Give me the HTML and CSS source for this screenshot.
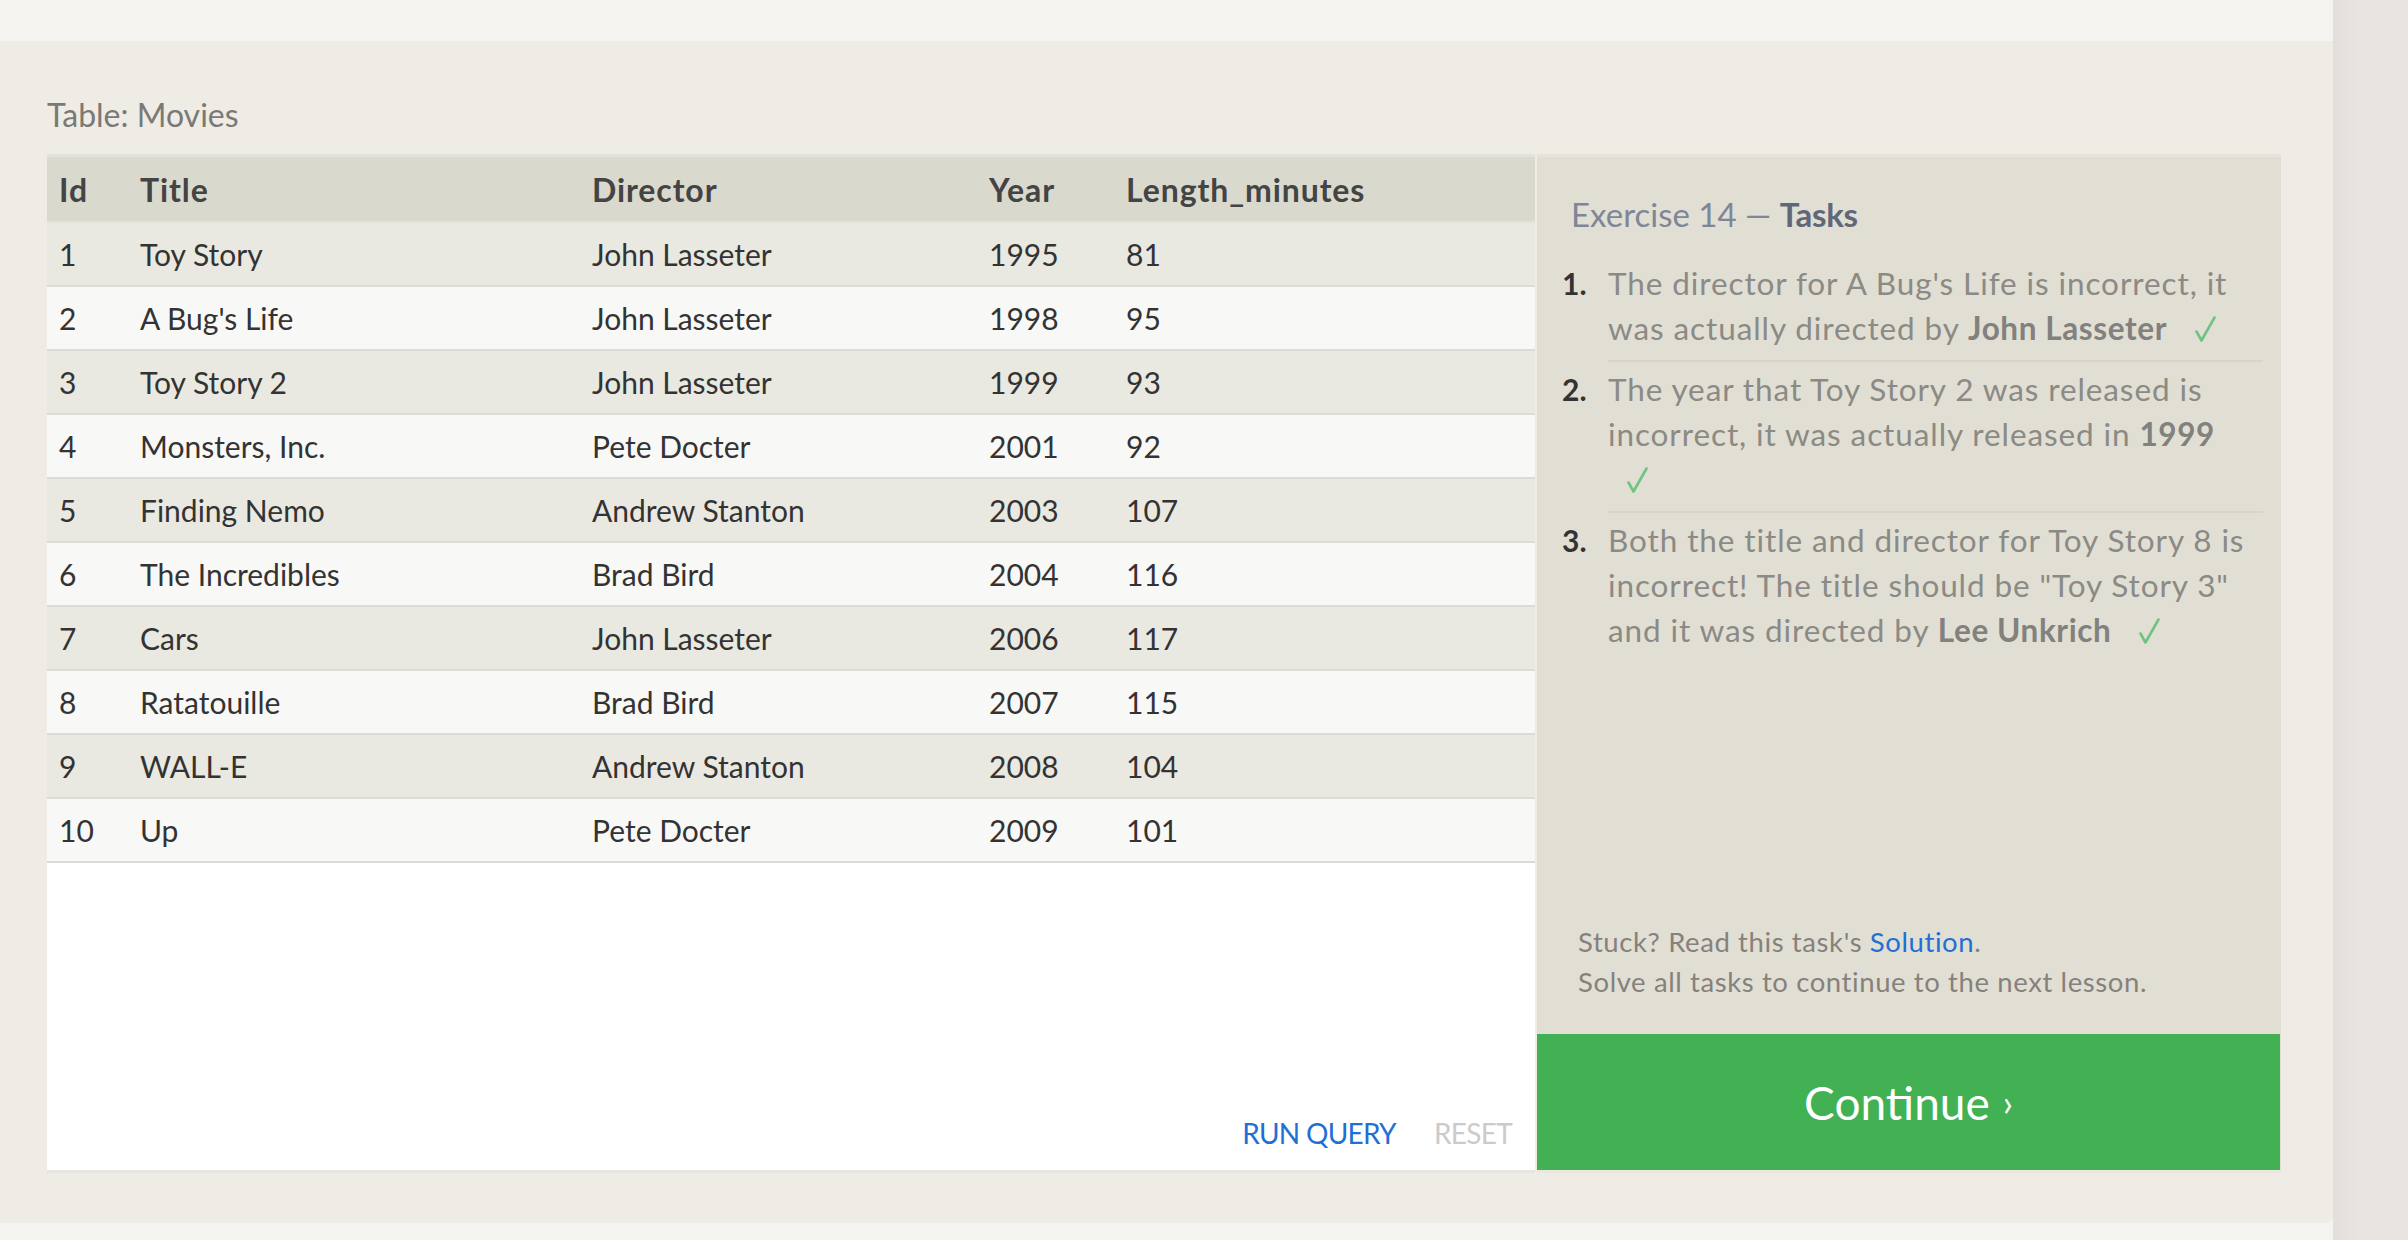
FILE: index.html
```html
<!DOCTYPE html>
<html lang="en">
<head>
<meta charset="utf-8">
<title>SQL Lesson – Exercise 14</title>
<link rel="stylesheet" href="styles.css">
</head>
<body>
<div class="page">
  <div class="main">
    <div class="topband"></div>
    <div class="lesson">
      <div class="caption">Table: Movies</div>
      <div class="exercise">
        <div class="left">
          <table class="results">
            <colgroup>
              <col class="c-id"><col class="c-title"><col class="c-dir"><col class="c-year"><col>
            </colgroup>
            <thead>
              <tr><th>Id</th><th>Title</th><th>Director</th><th>Year</th><th>Length_minutes</th></tr>
            </thead>
            <tbody>
              <tr><td>1</td><td>Toy Story</td><td>John Lasseter</td><td>1995</td><td>81</td></tr>
              <tr><td>2</td><td>A Bug's Life</td><td>John Lasseter</td><td>1998</td><td>95</td></tr>
              <tr><td>3</td><td>Toy Story 2</td><td>John Lasseter</td><td>1999</td><td>93</td></tr>
              <tr><td>4</td><td>Monsters, Inc.</td><td>Pete Docter</td><td>2001</td><td>92</td></tr>
              <tr><td>5</td><td>Finding Nemo</td><td>Andrew Stanton</td><td>2003</td><td>107</td></tr>
              <tr><td>6</td><td>The Incredibles</td><td>Brad Bird</td><td>2004</td><td>116</td></tr>
              <tr><td>7</td><td>Cars</td><td>John Lasseter</td><td>2006</td><td>117</td></tr>
              <tr><td>8</td><td>Ratatouille</td><td>Brad Bird</td><td>2007</td><td>115</td></tr>
              <tr><td>9</td><td>WALL-E</td><td>Andrew Stanton</td><td>2008</td><td>104</td></tr>
              <tr><td>10</td><td>Up</td><td>Pete Docter</td><td>2009</td><td>101</td></tr>
            </tbody>
          </table>
          <div class="query">
            <span class="btn run">RUN QUERY</span>
            <span class="btn reset">RESET</span>
          </div>
        </div>
        <div class="right">
          <h2 class="ex-title">Exercise 14 — <span class="tasks">Tasks</span></h2>
          <ol class="task-list">
            <li><span class="num">1.</span><span class="txt">The director for A Bug's Life is incorrect, it was actually directed by <b>John Lasseter</b> <svg class="check" viewBox="0 0 22 26" width="22" height="26"><path d="M2.5 15.5 L7.5 24.5 L20.5 1.5" /></svg></span></li>
            <li><span class="num">2.</span><span class="txt">The year that Toy Story 2 was released is incorrect, it was actually released in <b>1999</b> <svg class="check" viewBox="0 0 22 26" width="22" height="26"><path d="M2.5 15.5 L7.5 24.5 L20.5 1.5" /></svg></span></li>
            <li><span class="num">3.</span><span class="txt">Both the title and director for Toy Story 8 is incorrect! The title should be "Toy Story 3" and it was directed by <b>Lee Unkrich</b> <svg class="check" viewBox="0 0 22 26" width="22" height="26"><path d="M2.5 15.5 L7.5 24.5 L20.5 1.5" /></svg></span></li>
          </ol>
          <div class="help">
            <div>Stuck? Read this task's <a class="link" href="#">Solution</a>.</div>
            <div>Solve all tasks to continue to the next lesson.</div>
          </div>
          <div class="continue">Continue <span class="chev">›</span></div>
        </div>
      </div>
    </div>
    <div class="bottomband"></div>
  </div>
  <div class="strip"></div>
</div>
</body>
</html>
```

FILE: styles.css
```css
* { box-sizing: border-box; }
html, body { margin: 0; padding: 0; }
body {
  width: 2408px;
  height: 1240px;
  overflow: hidden;
  font-family: Lato, "Liberation Sans", sans-serif;
  background: #e8e4e1;
}
.page { display: flex; height: 1240px; }
.main { width: 2333px; display: flex; flex-direction: column; background: #f5f4f0; }
.topband { height: 41px; background: #f5f4f0; }
.lesson {
  height: 1182px;
  background: #efece5;
  border-bottom-right-radius: 7px;
  padding: 54px 52px 0 47px;
}
.bottomband { flex: 1; background: #f5f4f0; }
.strip { flex: 1; background: linear-gradient(to right, #e2dedb, #e8e4e1 24px); }

.caption {
  font-size: 32px;
  line-height: 40px;
  height: 40px;
  color: #7a7976;
  margin-bottom: 19px;
}

.exercise { display: flex; gap: 2px; height: 1019px; }

.left {
  width: 1488px;
  display: flex;
  flex-direction: column;
  background: #fff;
  border-top: 3px solid #e3e2db;
  border-bottom: 3px solid #e7e5dd;
}
.results {
  width: 100%;
  border-collapse: separate;
  border-spacing: 0;
  table-layout: fixed;
  font-size: 30px;
}
.c-id { width: 81px; }
.c-title { width: 452px; }
.c-dir { width: 397px; }
.c-year { width: 137px; }
.results th, .results td {
  text-align: left;
  padding: 0 0 0 12px;
  white-space: nowrap;
  border-bottom: 2px solid #dcdcd6;
}
.results th {
  height: 66px;
  background: #dad9ce;
  color: #444;
  font-size: 32px;
  font-weight: 700;
  letter-spacing: 0.9px;
  border-bottom-color: #e2e1dc;
}
.results td { height: 64px; color: #333; }
.results tbody tr:nth-child(odd) td { background: #e9e8e1; }
.results tbody tr:nth-child(even) td { background: #f8f8f7; }

.query {
  flex: 1;
  display: flex;
  justify-content: flex-end;
  align-items: flex-end;
  gap: 38px;
  padding: 0 23px 19px 0;
  font-size: 28px;
  line-height: 36px;
}
.btn { letter-spacing: -0.7px; }
.run { color: #1f6fd6; }
.reset { color: #cbcbcb; }

.right {
  width: 744px;
  display: flex;
  flex-direction: column;
  background: #e1dfd4;
  border-top: 3px solid #e5e3da;
  border-bottom: 3px solid #e9e7df;
}
.ex-title {
  margin: 37px 0 0 34px;
  font-size: 33px;
  line-height: 40px;
  font-weight: 400;
  color: #7e8698;
}
.tasks { color: #5f6779; font-weight: 700; letter-spacing: -0.3px; }

.task-list {
  list-style: none;
  margin: 22px 18px 0 25px;
  padding: 0;
  font-size: 31.5px;
  line-height: 45px;
}
.task-list li { display: flex; }
.num {
  width: 46px;
  flex: none;
  padding-top: 5px;
  font-size: 30px;
  font-weight: 700;
  color: #333;
}
.txt {
  flex: 1;
  padding: 5px 0 9px;
  border-bottom: 2px solid #d7d5ca;
  color: #8b8a85;
  letter-spacing: 0.9px;
}
.task-list li:last-child .txt { border-bottom: none; }
.txt b { font-weight: 700; color: #82817d; letter-spacing: 0.6px; }
.check {
  margin-left: 18px;
  margin-right: 14px;
  vertical-align: -2px;
  fill: none;
  stroke: #6fc381;
  stroke-width: 2.6;
  stroke-linecap: round;
  stroke-linejoin: round;
}

.help {
  margin-top: auto;
  padding: 0 0 32px 41px;
  font-size: 27.5px;
  line-height: 40px;
  letter-spacing: 0.6px;
  color: #86817c;
}
.link { color: #1f6fd6; text-decoration: none; }

.continue {
  height: 136px;
  margin-right: 1px;
  background: #41b153;
  color: #fff;
  font-size: 46px;
  display: flex;
  align-items: center;
  justify-content: center;
  gap: 13px;
}
.chev { font-size: 36px; }
```
